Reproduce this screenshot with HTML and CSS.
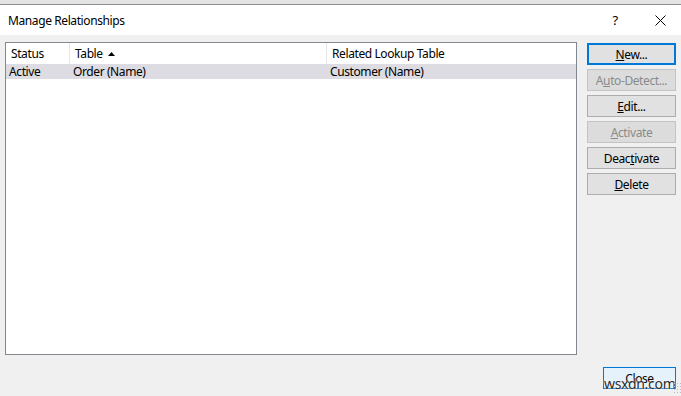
FILE: index.html
```html
<!DOCTYPE html>
<html lang="en">
<head>
    <meta charset="UTF-8">
    <title>Manage Relationships</title>
    <link rel="stylesheet" href="styles.css">
</head>
<body>
    <div class="topstrip"></div>
    <div class="titlebar">
        <span class="title">Manage Relationships</span>
        <span class="help">?</span>
        <svg class="closex" width="11" height="11" viewBox="0 0 11 11">
            <path d="M0.5 0.5 L10.5 10.5 M10.5 0.5 L0.5 10.5" stroke="#000" stroke-width="1" fill="none"/>
        </svg>
    </div>

    <div class="content">
        <div class="listbox">
            <div class="row header">
                <div class="col c1">Status</div>
                <div class="col c2">Table
                    <svg class="sort" width="7" height="4" viewBox="0 0 7 4"><path d="M0 4 L3.5 0 L7 4 Z" fill="#000"/></svg>
                </div>
                <div class="col c3">Related Lookup Table</div>
            </div>
            <div class="row selected">
                <div class="col c1">Active</div>
                <div class="col c2">Order (Name)</div>
                <div class="col c3">Customer (Name)</div>
            </div>
        </div>
        <div class="buttons">
            <button class="button default"><u>N</u>ew...</button>
            <button class="button" disabled>A<u>u</u>to-Detect...</button>
            <button class="button"><u>E</u>dit...</button>
            <button class="button" disabled><u>A</u>ctivate</button>
            <button class="button">Deac<u>t</u>ivate</button>
            <button class="button"><u>D</u>elete</button>
        </div>
    </div>

    <div class="footer">
        <button class="button closebtn">Close</button>
        <span class="watermark">wsxdn.com</span>
        <span class="grip"></span>
    </div>
</body>
</html>
```

FILE: styles.css
```css
body { margin: 0; width: 681px; height: 396px; overflow: hidden; background: #f0f0f0; font-family: "Noto Sans", "Liberation Sans", sans-serif; font-size: 12px; letter-spacing: -0.4px; color: #000; position: relative; }
.topstrip { height: 4px; background: #e4e4e4; border-bottom: 1px solid #8c8c8c; }
.titlebar { height: 30px; background: #fff; display: flex; align-items: center; }
.title { padding-left: 8px; flex: 1; font-size: 12px; }
.help { width: 12px; text-align: center; margin-right: 34px; font-size: 13px; }
.closex { margin-right: 15px; }

.content { display: flex; padding: 7px 5px 0 5px; gap: 10px; }
.listbox { width: 570px; height: 311px; background: #fff; border: 1px solid #828790; }
.row { display: flex; }
.header { height: 21px; align-items: center; }
.header .col { border-right: 1px solid #e5e5e5; height: 21px; line-height: 21px; padding-left: 5px; box-sizing: border-box; }
.header .c3 { border-right: none; }
.c1 { width: 64px; }
.c2 { width: 257px; }
.c3 { flex: 1; }
.selected { background: #dcdce2; height: 15px; line-height: 15px; }
.selected .col { padding-left: 3px; box-sizing: border-box; }
.sort { margin-left: 3px; vertical-align: 2px; }

.buttons { display: flex; flex-direction: column; gap: 4px; padding-top: 1px; }
.button { width: 89px; height: 22px; padding: 0; background: #e1e1e1; border: 1px solid #adadad; font-family: inherit; font-size: 12px; letter-spacing: -0.4px; color: #000; }
.button.default { border: 2px solid #0078d7; }
.button:disabled { background: #dcdcdc; border-color: #c4c4c4; color: #8a8a8a; }

.footer { position: relative; height: 41px; }
.closebtn { position: absolute; left: 603px; top: 12px; width: 73px; height: 22px; background: #e5f1fb; border: 1px solid #0078d7; }
.watermark { position: absolute; left: 604px; top: 19px; font-size: 14px; color: #2a2a2a; letter-spacing: -0.3px; text-shadow: 0 0 2px #fff, 0 0 1px #fff; }
.grip { position: absolute; right: 0; bottom: 2px; width: 8px; height: 12px; background-image: radial-gradient(circle, #bcbcbc 1px, transparent 1px); background-size: 3px 3px; }
```
